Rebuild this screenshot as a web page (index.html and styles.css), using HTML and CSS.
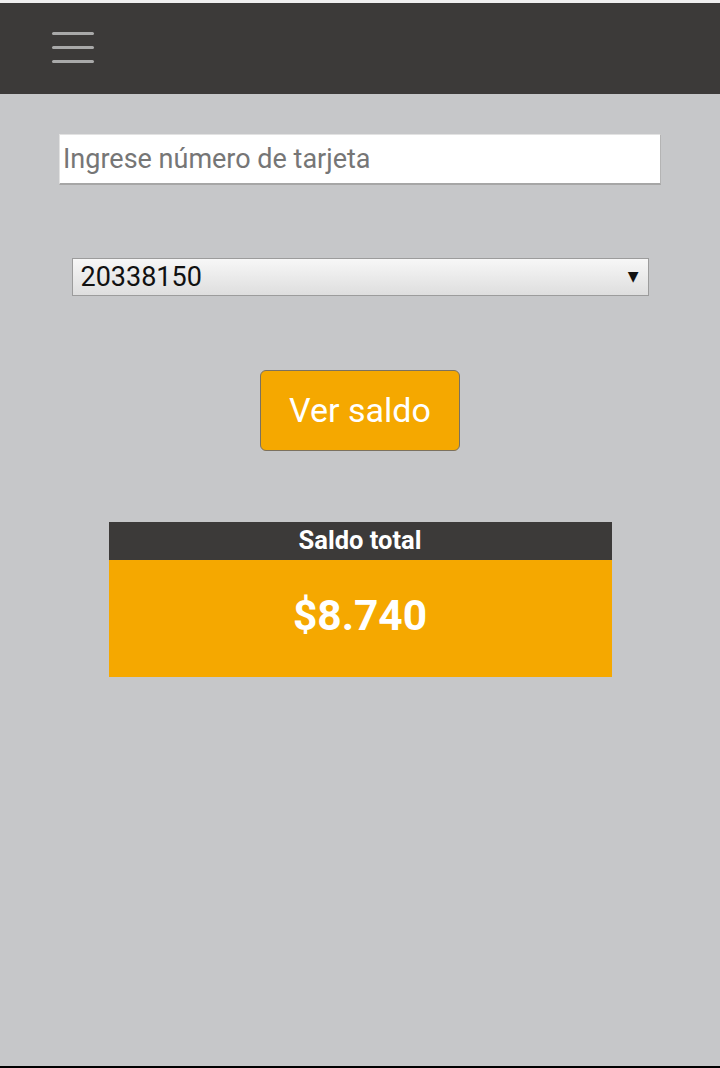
FILE: index.html
```html
<!DOCTYPE html>
<html>
<head>
    <meta charset="utf-8">
    <meta name="viewport" content="width=device-width, initial-scale=1.0">
    <title>Consulta de saldo</title>
    <link rel="stylesheet" href="styles.css">
</head>
<body>
    <!-- Top bar with menu toggle -->
    <header class="top-bar">
        <button class="menu-toggle" aria-label="Menú">
            <span></span>
            <span></span>
            <span></span>
        </button>
    </header>

    <main class="content">
        <input class="card-input" type="text" placeholder="Ingrese número de tarjeta">

        <div class="select-row">
            <div class="card-select">
                <span class="card-select-value">20338150</span>
                <span class="card-select-arrow">▼</span>
            </div>
        </div>

        <button class="btn-saldo">Ver saldo</button>

        <section class="saldo-box">
            <div class="saldo-title">Saldo total</div>
            <div class="saldo-amount">$8.740</div>
        </section>
    </main>
</body>
</html>
```

FILE: styles.css
```css
:root {
    --bg-color: #c6c7c9;
    --dark: #3c3a39;
    --accent: #f5a800;
    --line: #a9a9a9;
}

* {
    box-sizing: border-box;
}

html, body {
    height: 100%;
}

body {
    margin: 0;
    display: flex;
    flex-direction: column;
    background: var(--bg-color);
    font-family: Roboto, "Noto Sans", sans-serif;
    border-top: 3px solid #efefef;
    border-bottom: 2px solid #000;
}

.top-bar {
    height: 91px;
    background: var(--dark);
    display: flex;
    align-items: center;
    padding-left: 52px;
}

.menu-toggle {
    display: flex;
    flex-direction: column;
    gap: 11px;
    padding: 0;
    margin: 0 0 2px 0;
    border: none;
    background: none;
}

.menu-toggle span {
    display: block;
    width: 42px;
    height: 3px;
    border-radius: 2px;
    background: var(--line);
}

.content {
    flex: 1;
    display: flex;
    flex-direction: column;
    align-items: center;
    padding-top: 40px;
}

.card-input {
    width: 602px;
    height: 51px;
    padding: 0 0 0 3px;
    border: 1px solid #e2e2e2;
    border-bottom: 2px solid #a6a6a6;
    border-right: 1px solid #b4b4b4;
    background: #fff;
    font-family: Roboto, sans-serif;
    font-size: 27px;
    color: #222;
    outline: none;
}

.card-input::placeholder {
    color: #767676;
}

.select-row {
    margin-top: 73px;
}

.card-select {
    width: 577px;
    height: 38px;
    display: flex;
    align-items: center;
    justify-content: space-between;
    padding: 0 9px 1px 8px;
    border: 1px solid #9c9c9c;
    background: linear-gradient(#f7f7f7, #dedede);
}

.card-select-value {
    font-size: 27px;
    color: #111;
}

.card-select-arrow {
    font-family: "DejaVu Sans", sans-serif;
    font-size: 14px;
    color: #111;
    margin-bottom: 2px;
}

.btn-saldo {
    margin-top: 74px;
    width: 200px;
    height: 81px;
    background: var(--accent);
    border: 1px solid #7b715f;
    border-radius: 6px;
    color: #fff;
    font-family: Roboto, sans-serif;
    font-size: 34px;
    padding: 0 0 2px 0;
}

.saldo-box {
    margin-top: 71px;
    width: 503px;
}

.saldo-title {
    height: 38px;
    background: var(--dark);
    color: #fff;
    font-weight: 700;
    font-size: 25.5px;
    text-align: center;
    line-height: 37px;
}

.saldo-amount {
    height: 117px;
    background: var(--accent);
    color: #fff;
    font-weight: 700;
    font-size: 42.5px;
    text-align: center;
    line-height: 112px;
}
```
